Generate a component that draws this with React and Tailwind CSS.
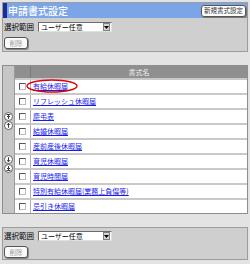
import React from 'react';

const forms = [
  '有給休暇届',
  'リフレッシュ休暇届',
  '慶弔表',
  '結婚休暇届',
  '産前産後休暇届',
  '育児休暇届',
  '育児時間届',
  '特別有給休暇届(業務上負傷等)',
  '忌引き休暇届',
];

function RangeSelect() {
  return (
    <div className="flex items-center gap-[2px] h-[10px]">
      <span className="text-[7.5px] leading-none text-black w-[32px]">選択範囲</span>
      <div className="flex items-center w-[74px] h-[10px] bg-white border border-t-[#6b6b6b] border-l-[#6b6b6b] border-r-[#e0e0e0] border-b-[#e0e0e0]">
        <span className="flex-1 pl-[2px] text-[7px] leading-none text-black">ユーザー任意</span>
        <div className="w-[7px] h-[8px] mr-[1px] bg-[#d4d4d4] border border-[#808080] flex items-center justify-center">
          <svg width="5" height="3" viewBox="0 0 5 3"><path d="M0 0h5L2.5 3z" fill="#000" /></svg>
        </div>
      </div>
    </div>
  );
}

function DeleteButton() {
  return (
    <button className="w-[24px] h-[12px] rounded-[3px] bg-[#fafafa] border border-[#555] shadow-[1px_1px_0_#888] text-[6.5px] leading-none text-[#9a9a9a] flex items-center justify-center">
      削除
    </button>
  );
}

function MoveIcon({ kind }) {
  return (
    <svg width="9" height="9" viewBox="0 0 9 9">
      <circle cx="4.5" cy="4.5" r="4" fill="#fff" stroke="#444" strokeWidth="0.8" />
      {kind === 'top' && <path d="M2.5 2.5h4M4.5 3.5v3.5M3 5l1.5-1.5L6 5" stroke="#222" strokeWidth="0.9" fill="none" />}
      {kind === 'up' && <path d="M4.5 2.3v4.5M2.8 4l1.7-1.7L6.2 4" stroke="#222" strokeWidth="0.9" fill="none" />}
      {kind === 'down' && <path d="M4.5 2.2v4.5M2.8 5l1.7 1.7L6.2 5" stroke="#222" strokeWidth="0.9" fill="none" />}
      {kind === 'bottom' && <path d="M2.5 6.5h4M4.5 2v3.5M3 4l1.5 1.5L6 4" stroke="#222" strokeWidth="0.9" fill="none" />}
    </svg>
  );
}

export default function App() {
  return (
    <div
      className="w-[250px] h-[264px] bg-[#e3e3e3] p-[2px] overflow-hidden leading-none"
      style={{ fontFamily: '"Noto Sans CJK JP", "Noto Sans", sans-serif' }}
    >
      {/* top panel */}
      <div className="h-[50px] bg-[#cfcfcf] border border-[#9c9c9c]">
        <div className="h-[15px] bg-[#7ca5e8] border-l-[4px] border-[#1d2b9e] flex items-center justify-between pl-[1px] pr-[1px]">
          <span className="text-[10px] leading-none text-white font-medium">申請書式設定</span>
          <button className="h-[12px] px-[2px] rounded-[3px] bg-white border border-[#555] shadow-[1px_1px_0_#777] text-[6.5px] leading-none text-[#333]">
            新規書式設定
          </button>
        </div>
        <div className="px-[1px] pt-[4px] flex flex-col gap-[5px]">
          <RangeSelect />
          <DeleteButton />
        </div>
      </div>

      {/* table */}
      <div className="mt-[13px] flex border border-[#8e8e8e] bg-white">
        <div className="w-[12px] bg-[#c6c6c6] border-r border-[#9a9a9a] flex flex-col items-center pt-[46px]">
          <MoveIcon kind="top" />
          <MoveIcon kind="up" />
          <div className="h-[25px]" />
          <MoveIcon kind="down" />
          <MoveIcon kind="bottom" />
        </div>
        <div className="flex-1 flex flex-col">
          <div className="h-[12px] bg-[#8f8f8f] flex">
            <div className="w-[16px] border-r border-[#7a7a7a]" />
            <div className="flex-1 flex items-center justify-center text-[7px] leading-none text-[#eeeeee]">書式名</div>
          </div>
          {forms.map((name, i) => (
            <div key={name} className="h-[15px] flex border-t-[2px] border-[#c9c9c9]">
              <div className="w-[16px] border-r border-[#b0b0b0] flex items-center justify-center">
                <div className="w-[7px] h-[7px] bg-white border border-t-[#555] border-l-[#555] border-r-[#bbb] border-b-[#bbb]" />
              </div>
              <div className="relative flex-1 flex items-center pl-[2px]">
                <a href="#" className="text-[7px] leading-none text-[#1a1aee] underline">{name}</a>
                {i === 0 && (
                  <svg className="absolute left-[-5px] top-[-1px]" width="52" height="14" viewBox="0 0 52 14">
                    <ellipse cx="26" cy="7" rx="25" ry="6" fill="none" stroke="#e00000" strokeWidth="1.4" />
                  </svg>
                )}
              </div>
            </div>
          ))}
        </div>
      </div>

      {/* bottom panel */}
      <div className="mt-[13px] h-[33px] bg-[#cfcfcf] border border-[#9c9c9c] px-[1px] pt-[3px] flex flex-col gap-[5px]">
        <RangeSelect />
        <DeleteButton />
      </div>
    </div>
  );
}
